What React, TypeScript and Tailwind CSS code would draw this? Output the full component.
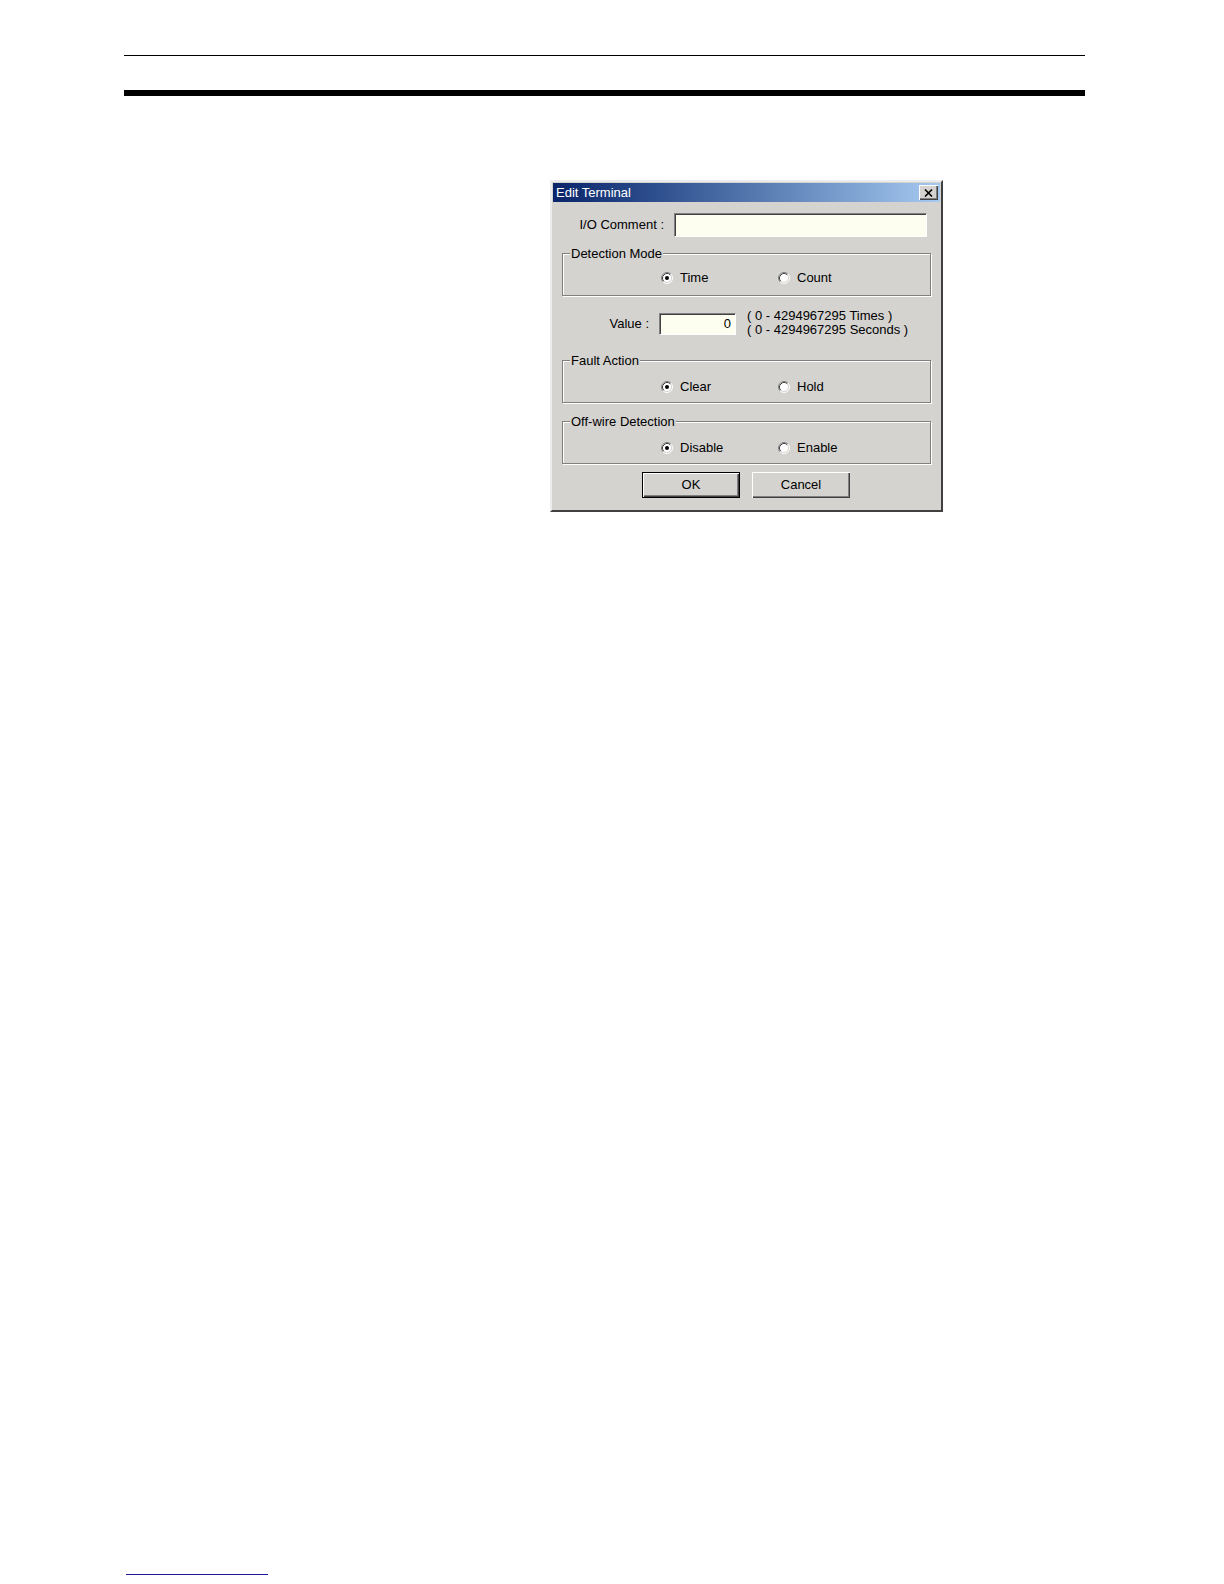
import type { ReactNode } from "react"

const face = "bg-[#d4d3d0]"

function Radio({ checked }: { checked?: boolean }) {
  return (
    <svg width="12" height="12" viewBox="0 0 12 12" className="flex-none">
      <circle cx="6" cy="6" r="5" fill="#fff" />
      <path d="M2.11 9.89A5.5 5.5 0 0 1 9.89 2.11" fill="none" stroke="#808080" />
      <path d="M9.89 2.11A5.5 5.5 0 0 1 2.11 9.89" fill="none" stroke="#fff" />
      <path d="M2.82 9.18A4.5 4.5 0 0 1 9.18 2.82" fill="none" stroke="#404040" />
      <path d="M9.18 2.82A4.5 4.5 0 0 1 2.82 9.18" fill="none" stroke="#d4d3d0" />
      {checked && <circle cx="6" cy="6" r="2" fill="#000" />}
    </svg>
  )
}

function Option({ label, checked }: { label: string; checked?: boolean }) {
  return (
    <div className="flex w-[117px] items-center gap-[7px]">
      <Radio checked={checked} />
      <span>{label}</span>
    </div>
  )
}

function Group({
  title,
  pad,
  children,
}: {
  title: string
  pad: string
  children: ReactNode
}) {
  return (
    <fieldset className="mx-[9px] h-[50px] border border-[#808080] shadow-[inset_1px_1px_0_#fff,1px_1px_0_#fff]">
      <legend className={`ml-[7px] px-px leading-[15px] ${face}`}>{title}</legend>
      <div className={`flex h-[16px] items-center pl-[98px] ${pad}`}>{children}</div>
    </fieldset>
  )
}

function Button({ children, primary }: { children: ReactNode; primary?: boolean }) {
  return (
    <button
      className={`h-[26px] w-[98px] ${face} shadow-[inset_1px_1px_0_#fff,inset_-1px_-1px_0_#404040,inset_-2px_-2px_0_#808080] ${
        primary ? "border border-black" : ""
      }`}
    >
      {children}
    </button>
  )
}

function Field({ className, children }: { className: string; children?: ReactNode }) {
  return (
    <div
      className={`border border-t-[#808080] border-l-[#808080] border-r-white border-b-white bg-[#fdfdf0] shadow-[inset_1px_1px_0_#404040] ${className}`}
    >
      {children}
    </div>
  )
}

function EditTerminal() {
  return (
    <div
      className={`ml-[550px] flex h-[332px] w-[393px] flex-col border-2 border-t-[#ececec] border-l-[#ececec] border-r-[#404040] border-b-[#404040] p-px ${face} text-[13px] text-black`}
    >
      <div className="flex h-[19px] flex-none items-center justify-between bg-gradient-to-r from-[#0a246a] to-[#a6caf0] pr-[2px] pl-[3px] text-white">
        <span>Edit Terminal</span>
        <div
          className={`flex h-[15px] w-[19px] items-center justify-center ${face} shadow-[inset_1px_1px_0_#fff,inset_-1px_-1px_0_#404040,inset_-2px_-2px_0_#808080]`}
        >
          <svg width="9" height="8" viewBox="0 0 9 8">
            <path d="M1 0.5L8 7.5M8 0.5L1 7.5" stroke="#000" strokeWidth="1.6" />
          </svg>
        </div>
      </div>

      <div className="mt-[11px] flex h-[24px] items-center">
        <span className="w-[111px] text-right">I/O Comment :</span>
        <Field className="ml-[10px] h-[24px] w-[253px]" />
      </div>

      <div className="mt-[9px]">
        <Group title="Detection Mode" pad="mt-[9px]">
          <Option label="Time" checked />
          <Option label="Count" />
        </Group>
      </div>

      <div className="mt-[17px] flex h-[22px] items-center">
        <span className="w-[96px] text-right">Value :</span>
        <Field className="ml-[10px] flex h-[22px] w-[77px] items-center justify-end pr-[4px]">
          0
        </Field>
        <div className="ml-[11px] -mt-[2px] flex flex-col leading-[14px]">
          <span>( 0 - 4294967295 Times )</span>
          <span>( 0 - 4294967295 Seconds )</span>
        </div>
      </div>

      <div className="mt-[18px]">
        <Group title="Fault Action" pad="mt-[11px]">
          <Option label="Clear" checked />
          <Option label="Hold" />
        </Group>
      </div>

      <div className="mt-[11px]">
        <Group title="Off-wire Detection" pad="mt-[11px]">
          <Option label="Disable" checked />
          <Option label="Enable" />
        </Group>
      </div>

      <div className="mt-[8px] flex gap-[12px] pl-[89px]">
        <Button primary>OK</Button>
        <Button>Cancel</Button>
      </div>
    </div>
  )
}

export default function App() {
  return (
    <div className="flex h-screen w-full flex-col overflow-hidden bg-white font-['Liberation_Sans',Arial,sans-serif]">
      <div className="mt-[55px] ml-[124px] h-px w-[961px] flex-none bg-black" />
      <div className="mt-[34px] ml-[124px] h-[6px] w-[961px] flex-none bg-black" />
      <div className="mt-[84px] flex-none">
        <EditTerminal />
      </div>
      <div className="mt-auto mb-[9px] ml-[126px] h-px w-[142px] flex-none bg-[#1a1a9a]" />
    </div>
  )
}
